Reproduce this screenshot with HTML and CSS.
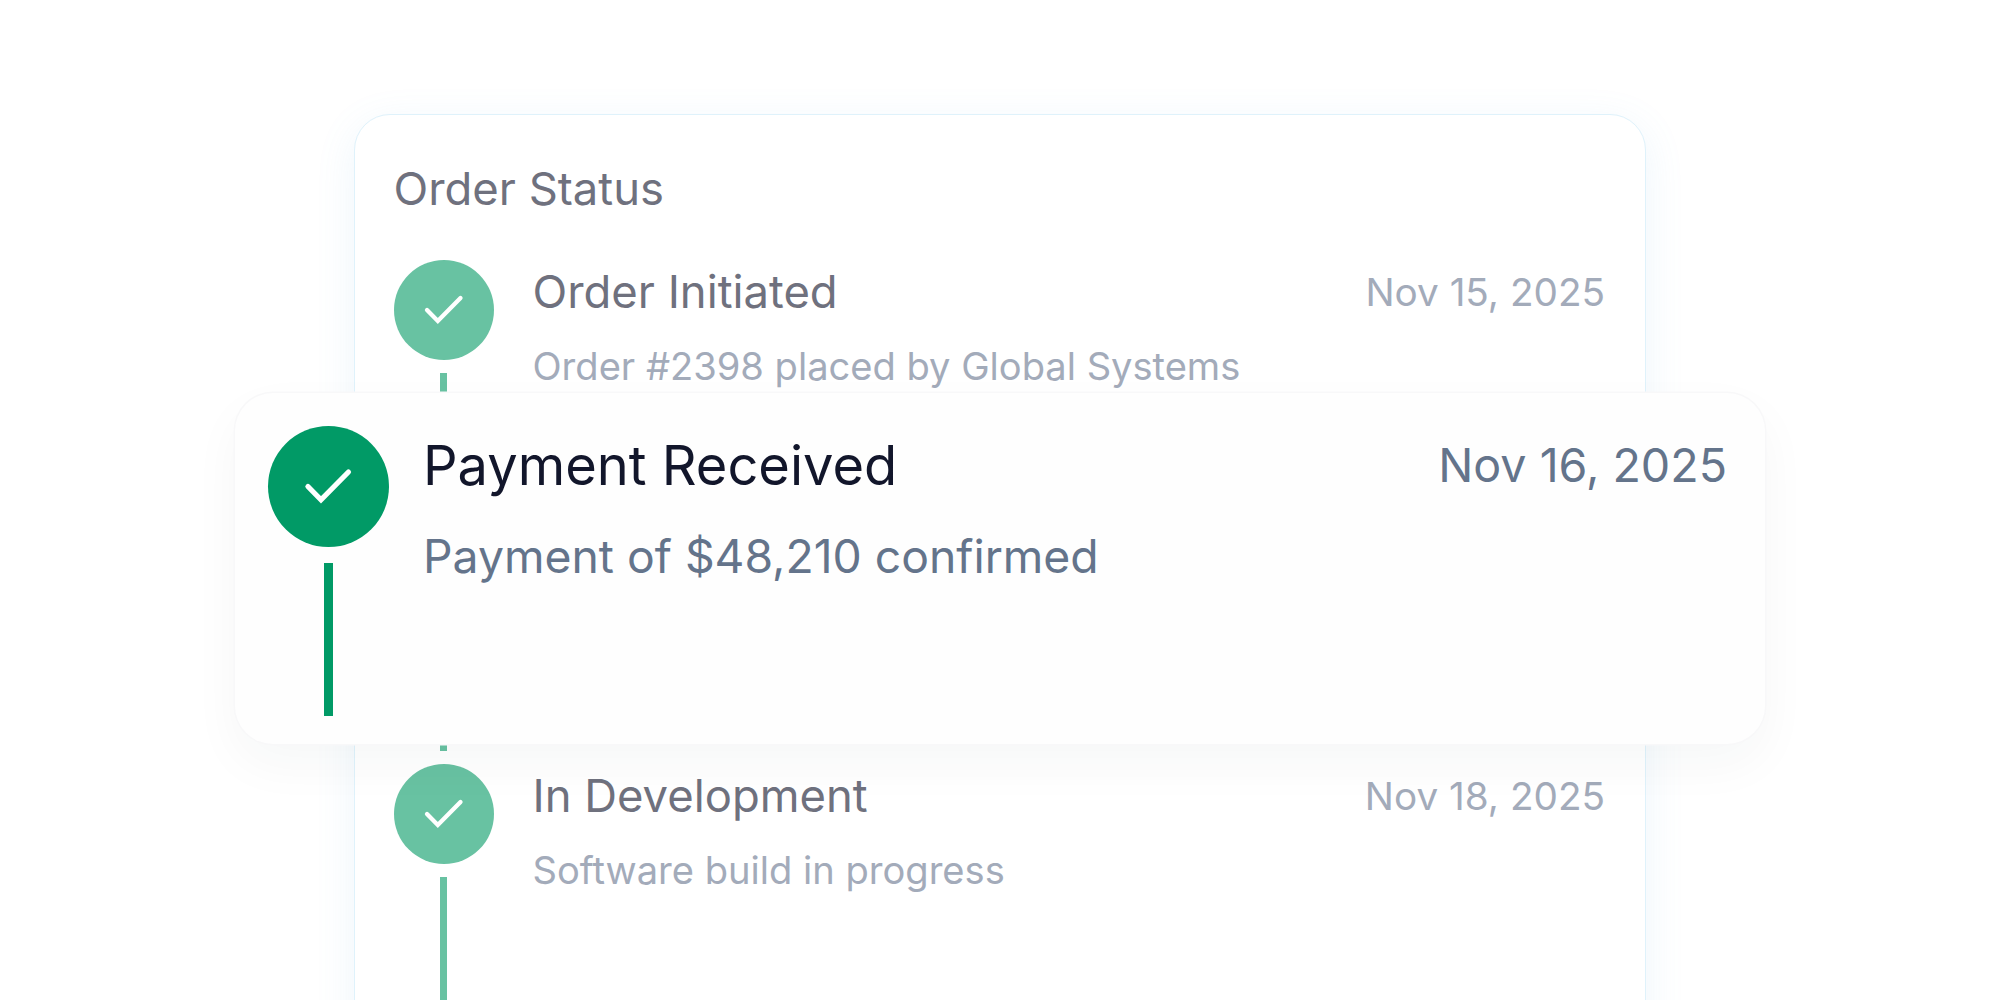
FILE: index.html
```html
<!DOCTYPE html>
<html lang="en">
<head>
<meta charset="utf-8">
<title>Order Status</title>
<link rel="stylesheet" href="styles.css">
</head>
<body>
<main class="stage">
  <section class="card">
    <h2 class="card-title">Order Status</h2>
    <div class="step">
      <div class="rail">
        <span class="dot"><svg class="check" viewBox="0 0 100 100"><path d="M33 50 43.8 61 66.5 38"/></svg></span>
        <span class="line"></span>
      </div>
      <div class="body">
        <div class="head"><span class="name">Order Initiated</span><span class="date">Nov 15, 2025</span></div>
        <p class="desc">Order #2398 placed by Global Systems</p>
      </div>
    </div>
    <div class="step">
      <div class="rail">
        <span class="dot"></span>
        <span class="line"></span>
      </div>
    </div>
    <div class="step">
      <div class="rail">
        <span class="dot"><svg class="check" viewBox="0 0 100 100"><path d="M33 50 43.8 61 66.5 38"/></svg></span>
        <span class="line"></span>
      </div>
      <div class="body">
        <div class="head"><span class="name">In Development</span><span class="date">Nov 18, 2025</span></div>
        <p class="desc">Software build in progress</p>
      </div>
    </div>
  </section>
  <section class="focus">
    <div class="rail focus-rail">
      <span class="dot focus-dot"><svg class="check" viewBox="0 0 100 100"><path d="M33 50 43.8 61 66.5 38"/></svg></span>
      <span class="line focus-line"></span>
    </div>
    <div class="body focus-body">
      <div class="head"><span class="name focus-name">Payment Received</span><span class="date focus-date">Nov 16, 2025</span></div>
      <p class="desc focus-desc">Payment of $48,210 confirmed</p>
    </div>
  </section>
</main>
</body>
</html>
```
FILE: styles.css
```css
* { box-sizing: border-box; }
html, body { margin: 0; height: 1000px; overflow: hidden; background: #fff; }
body { font-family: Inter, "Liberation Sans", sans-serif; }
.stage { position: relative; height: 1000px; padding: 114px 354px 0; }
.card {
  width: 1292px;
  height: 1100px;
  padding: 47px 40px 0 38.5px;
  background: #fff;
  border: 1.5px solid #dff2fb;
  border-radius: 36px;
  box-shadow: 0 10px 40px rgba(100, 170, 230, .11);
}
.card-title {
  margin: 0 0 44px;
  font-size: 45.4px;
  line-height: 54px;
  font-weight: 400;
  color: #6f717e;
}
.step { display: flex; gap: 39px; height: 252px; }
.rail { display: flex; flex-direction: column; align-items: center; width: 100px; flex: none; }
.dot {
  width: 100px; height: 100px; border-radius: 50%;
  background: #68c2a2; flex: none;
}
.check { display: block; width: 100%; height: 100%; fill: none; stroke: #fff; stroke-width: 4.3; stroke-linecap: round; stroke-linejoin: miter; }
.line { width: 7px; height: 126px; margin-top: 13px; background: #68c2a2; }
.body { flex: 1; min-width: 0; padding-top: 5px; }
.head { display: flex; justify-content: space-between; align-items: center; }
.name { font-size: 45.4px; line-height: 54px; color: #6f717e; }
.date { font-size: 38.7px; line-height: 54px; color: #a3abba; }
.desc { margin: 23px 0 0; font-size: 38.1px; line-height: 48px; color: #a3abba; }
.focus {
  position: absolute;
  left: 235px; top: 393px;
  width: 1530px; height: 351px;
  display: flex;
  gap: 34px;
  padding: 33px 38px 0 33px;
  background: #fefefe;
  border-radius: 38px;
  box-shadow: 0 0 0 1.5px #f8f8f9, 0 20px 50px rgba(30, 40, 60, .04);
}
.focus-rail { width: 121px; }
.focus-dot { width: 121px; height: 121px; background: #019a66; }
.focus-line { width: 8.5px; height: 153px; margin-top: 16px; background: #019a66; }
.focus-body { padding-top: 6px; }
.focus-name { font-size: 54.2px; line-height: 66px; color: #12162b; }
.focus-date { font-size: 46.6px; line-height: 66px; color: #64748b; }
.focus-desc { margin: 29px 0 0; font-size: 46.3px; line-height: 58px; color: #64748b; }
```
